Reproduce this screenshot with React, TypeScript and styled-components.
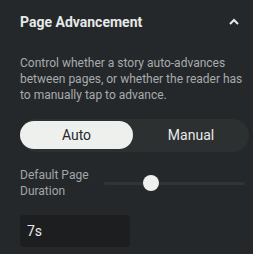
import React, { useState } from "react";
import styled, { createGlobalStyle } from "styled-components";

const Global = createGlobalStyle`
  html, body { margin: 0; padding: 0; background: #25282a; }
  body { font-family: Roboto, "Liberation Sans", sans-serif; -webkit-font-smoothing: antialiased; }
`;

const Panel = styled.section`
  width: 253px;
  height: 254px;
  box-sizing: border-box;
  padding: 0 0 0 20px;
  background: #25282a;
  overflow: hidden;
`;

const Header = styled.div`
  height: 44px;
  display: flex;
  align-items: center;
  justify-content: space-between;
  padding-right: 13px;
`;

const Title = styled.h2`
  margin: 0;
  font-size: 14px;
  line-height: 20px;
  font-weight: 700;
  color: #e6e8e8;
`;

const Chevron = styled.svg`
  width: 12px;
  height: 12px;
  display: block;
`;

const Description = styled.p`
  margin: 11px 0 0;
  padding-right: 4px;
  font-size: 12px;
  line-height: 16px;
  color: #a8abac;
`;

const Toggle = styled.div`
  margin-top: 16px;
  width: 229px;
  height: 33px;
  box-sizing: border-box;
  padding: 2px 0;
  border-radius: 17px;
  background: #2d3031;
  display: grid;
  grid-template-columns: 113px 1fr;
`;

const ToggleOption = styled.button<{ $active: boolean }>`
  border: none;
  margin: 0;
  padding: 0;
  height: 28px;
  border-radius: 14px;
  font-family: inherit;
  font-size: 14px;
  cursor: pointer;
  background: ${(p) => (p.$active ? "#eef0ee" : "transparent")};
  color: ${(p) => (p.$active ? "#26292a" : "#e8eaea")};
`;

const SliderRow = styled.div`
  margin-top: 15px;
  display: flex;
  align-items: center;
`;

const Label = styled.div`
  width: 84px;
  flex: none;
  font-size: 12px;
  line-height: 16px;
  color: #a3a6a7;
`;

const Track = styled.div`
  position: relative;
  width: 141px;
  height: 3px;
  border-radius: 2px;
  background: #303435;
`;

const Thumb = styled.div`
  position: absolute;
  top: 50%;
  width: 16px;
  height: 16px;
  border-radius: 50%;
  background: #eef0ee;
  transform: translate(-50%, -50%);
`;

const Input = styled.input`
  margin-top: 16px;
  display: block;
  width: 110px;
  height: 32px;
  box-sizing: border-box;
  border: none;
  border-radius: 4px;
  background: #1c1e1f;
  color: #e8eaea;
  font-family: inherit;
  font-size: 14px;
  padding: 0 7px;
  outline: none;
`;

export default function App() {
  const [mode, setMode] = useState<"auto" | "manual">("auto");
  const value = 7;
  const min = 0;
  const max = 21;
  const pct = ((value - min) / (max - min)) * 100;
  return (
    <>
      <Global />
      <Panel>
        <Header>
          <Title>Page Advancement</Title>
          <Chevron viewBox="0 0 12 12" fill="none">
            <path d="M2 8 L6 4 L10 8" stroke="#e8eaea" strokeWidth="2" />
          </Chevron>
        </Header>
        <Description>
          Control whether a story auto-advances between pages, or whether the
          reader has to manually tap to advance.
        </Description>
        <Toggle>
          <ToggleOption $active={mode === "auto"} onClick={() => setMode("auto")}>
            Auto
          </ToggleOption>
          <ToggleOption $active={mode === "manual"} onClick={() => setMode("manual")}>
            Manual
          </ToggleOption>
        </Toggle>
        <SliderRow>
          <Label>Default Page Duration</Label>
          <Track>
            <Thumb style={{ left: `${pct}%` }} />
          </Track>
        </SliderRow>
        <Input defaultValue="7s" />
      </Panel>
    </>
  );
}
